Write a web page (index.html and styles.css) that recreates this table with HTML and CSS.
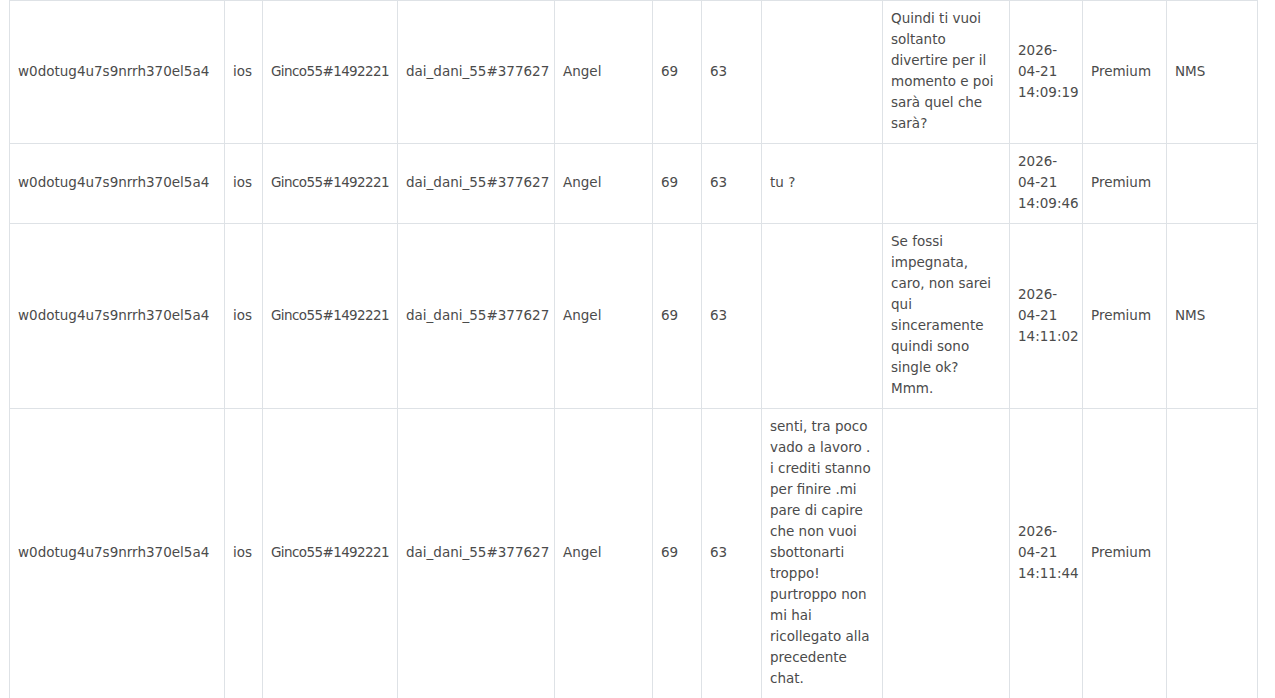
FILE: index.html
```html
<!DOCTYPE html>
<html lang="it">
<head>
<meta charset="utf-8">
<title>Messaggi</title>
<link rel="stylesheet" href="styles.css">
</head>
<body>
<div class="wrap">
<table class="log">
<colgroup>
<col class="c-id"><col class="c-os"><col class="c-user"><col class="c-profile"><col class="c-name"><col class="c-a"><col class="c-b"><col class="c-msg"><col class="c-reply"><col class="c-date"><col class="c-plan"><col class="c-flag">
</colgroup>
<tbody>
<tr>
<td>w0dotug4u7s9nrrh370el5a4</td><td>ios</td><td class="tight">Ginco55#1492221</td><td>dai_dani_55#377627</td><td>Angel</td><td>69</td><td>63</td><td></td>
<td>Quindi ti vuoi soltanto divertire per il momento e poi sarà quel che sarà?</td>
<td>2026-04-21 14:09:19</td><td>Premium</td><td>NMS</td>
</tr>
<tr>
<td>w0dotug4u7s9nrrh370el5a4</td><td>ios</td><td class="tight">Ginco55#1492221</td><td>dai_dani_55#377627</td><td>Angel</td><td>69</td><td>63</td><td>tu ?</td>
<td></td>
<td>2026-04-21 14:09:46</td><td>Premium</td><td></td>
</tr>
<tr>
<td>w0dotug4u7s9nrrh370el5a4</td><td>ios</td><td class="tight">Ginco55#1492221</td><td>dai_dani_55#377627</td><td>Angel</td><td>69</td><td>63</td><td></td>
<td>Se fossi impegnata, caro, non sarei qui sinceramente quindi sono single ok? Mmm.</td>
<td>2026-04-21 14:11:02</td><td>Premium</td><td>NMS</td>
</tr>
<tr>
<td>w0dotug4u7s9nrrh370el5a4</td><td>ios</td><td class="tight">Ginco55#1492221</td><td>dai_dani_55#377627</td><td>Angel</td><td>69</td><td>63</td>
<td>senti, tra poco vado a lavoro . i crediti stanno per finire .mi pare di capire che non vuoi sbottonarti troppo! purtroppo non mi hai ricollegato alla precedente chat.</td>
<td></td>
<td>2026-04-21 14:11:44</td><td>Premium</td><td></td>
</tr>
</tbody>
</table>
</div>
</body>
</html>
```

FILE: styles.css
```css
html, body {
  margin: 0;
  padding: 0;
  background: #ffffff;
}
.wrap {
  padding: 0 17px 0 9px;
}
.log {
  border-collapse: collapse;
  table-layout: fixed;
  width: 1249px;
  font-family: "DejaVu Sans", sans-serif;
  font-size: 13.5px;
  line-height: 21px;
  color: #4b4b4b;
}
.log td {
  border: 1px solid #dee2e6;
  padding: 7px 8px 9px;
  vertical-align: middle;
  text-align: left;
  overflow-wrap: normal;
}
.log .tight {
  letter-spacing: -0.6px;
}
.c-id { width: 215px; }
.c-os { width: 38px; }
.c-user { width: 135px; }
.c-profile { width: 157px; }
.c-name { width: 98px; }
.c-a { width: 49px; }
.c-b { width: 60px; }
.c-msg { width: 121px; }
.c-reply { width: 127px; }
.c-date { width: 73px; }
.c-plan { width: 84px; }
.c-flag { width: 91px; }
```
